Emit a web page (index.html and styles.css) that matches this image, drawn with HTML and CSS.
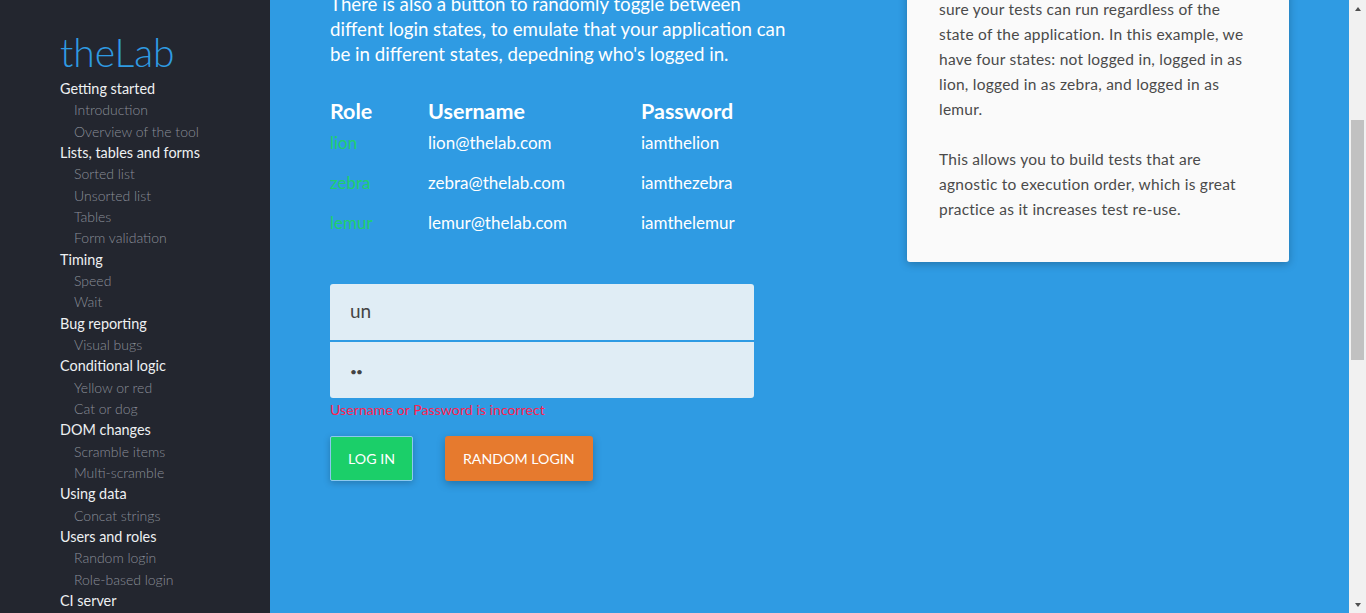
FILE: index.html
```html
<!DOCTYPE html>
<html lang="en">
<head>
<meta charset="utf-8">
<title>theLab - Random login</title>
<link rel="stylesheet" href="styles.css">
</head>
<body>
<div class="app">
  <nav class="sidebar">
    <div class="logo">theLab</div>
    <ul class="menu">
      <li>Getting started
        <ul><li>Introduction</li><li>Overview of the tool</li></ul>
      </li>
      <li>Lists, tables and forms
        <ul><li>Sorted list</li><li>Unsorted list</li><li>Tables</li><li>Form validation</li></ul>
      </li>
      <li>Timing
        <ul><li>Speed</li><li>Wait</li></ul>
      </li>
      <li>Bug reporting
        <ul><li>Visual bugs</li></ul>
      </li>
      <li>Conditional logic
        <ul><li>Yellow or red</li><li>Cat or dog</li></ul>
      </li>
      <li>DOM changes
        <ul><li>Scramble items</li><li>Multi-scramble</li></ul>
      </li>
      <li>Using data
        <ul><li>Concat strings</li></ul>
      </li>
      <li>Users and roles
        <ul><li>Random login</li><li>Role-based login</li></ul>
      </li>
      <li>CI server
        <ul><li>Jenkins</li></ul>
      </li>
    </ul>
  </nav>
  <main class="main" id="main">
    <div class="content">
      <section class="left">
        <h1 class="title">Random login</h1>
        <p class="text">Here you can log in as different users.</p>
        <p class="text">Each user has their own role.</p>
        <p class="text lead">There is also a button to randomly toggle between diffent login states, to emulate that your application can be in different states, depedning who's logged in.</p>
        <div class="users">
          <div class="th">Role</div><div class="th">Username</div><div class="th">Password</div>
          <div class="td role">lion</div><div class="td">lion@thelab.com</div><div class="td">iamthelion</div>
          <div class="td role">zebra</div><div class="td">zebra@thelab.com</div><div class="td">iamthezebra</div>
          <div class="td role">lemur</div><div class="td">lemur@thelab.com</div><div class="td">iamthelemur</div>
        </div>
        <form class="login" onsubmit="return false">
          <input class="field field-top" type="text" value="un" aria-label="Username">
          <input class="field field-bottom" type="password" value="pw" aria-label="Password">
          <div class="error">Username or Password is incorrect</div>
          <div class="actions">
            <button class="btn btn-login" type="button">Log in</button>
            <button class="btn btn-random" type="button">Random login</button>
          </div>
        </form>
      </section>
      <aside class="card">
        <p class="card-text">Users can have different roles.</p>
        <p class="card-text">It's important to make<br>sure your tests can run regardless of the state of the application. In this example, we have four states: not logged in, logged in as lion, logged in as zebra, and logged in as lemur.</p>
        <p class="card-text last">This allows you to build tests that are agnostic to execution order, which is great practice as it increases test re-use.</p>
      </aside>
    </div>
  </main>
  <div class="scrollbar" aria-hidden="true">
    <span class="sb-btn sb-up"></span>
    <div class="sb-track"><span class="sb-thumb"></span></div>
    <span class="sb-btn sb-down"></span>
  </div>
</div>
<script src="script.js"></script>
</body>
</html>
```

FILE: styles.css
```css
* { box-sizing: border-box; }
html, body { margin: 0; height: 100%; }
body {
  font-family: Lato, "Open Sans", sans-serif;
  overflow: hidden;
}
.app { display: flex; height: 100vh; }

.sidebar {
  width: 270px;
  flex: none;
  background: #23262f;
  padding: 30px 0 0 60px;
  overflow: hidden;
}
.logo {
  font-size: 39px;
  line-height: 44px;
  font-weight: 300;
  color: #2f9be3;
  margin-bottom: 4px;
}
.menu, .menu ul { list-style: none; margin: 0; padding: 0; }
.menu > li {
  color: #eef0f2;
  font-size: 14.4px;
  line-height: 21.33px;
}
.menu ul li {
  color: #8a8e98;
  font-size: 14px;
  font-weight: 300;
  padding-left: 14px;
}

.main {
  flex: 1;
  min-width: 0;
  overflow: hidden;
  background: #2f9be3;
}

.scrollbar {
  width: 17px;
  flex: none;
  display: flex;
  flex-direction: column;
  background: #f1f1f1;
}
.sb-btn {
  height: 17px;
  flex: none;
  display: flex;
  align-items: center;
  justify-content: center;
}
.sb-up::before {
  content: "";
  border-left: 3.5px solid transparent;
  border-right: 3.5px solid transparent;
  border-bottom: 4px solid #505050;
}
.sb-down::before {
  content: "";
  border-left: 3.5px solid transparent;
  border-right: 3.5px solid transparent;
  border-top: 4px solid #505050;
}
.sb-track {
  flex: 1;
  padding: 103px 2px 0;
}
.sb-thumb {
  display: block;
  height: 240px;
  background: #c1c1c1;
}

.content {
  display: grid;
  grid-template-columns: 462px 382px;
  justify-content: space-between;
  align-items: start;
  padding: 60px;
  min-height: 1480px;
}
.left {
  display: flex;
  flex-direction: column;
  color: #fff;
}
.title {
  margin: 0 0 44.5px;
  font-size: 36px;
  line-height: 50px;
  font-weight: 300;
}
.text {
  margin: 0 0 25px;
  font-size: 18.7px;
  line-height: 25px;
}
.text.lead { margin-bottom: 0; }

.users {
  display: grid;
  grid-template-columns: 98px 213px 113px;
  width: 424px;
  margin-top: 32.5px;
}
.th {
  font-size: 21.5px;
  line-height: 24px;
  font-weight: 700;
}
.td {
  font-size: 17px;
  line-height: 24px;
  padding: 8px 0;
}
.role { color: #1fd06c; }

.login {
  display: flex;
  flex-direction: column;
  align-items: flex-start;
  margin-top: 41px;
}
.field {
  width: 424px;
  height: 56px;
  border: none;
  outline: none;
  background: #e0edf5;
  padding: 0 20px 3px;
  font-family: inherit;
  font-size: 19px;
  color: #444;
}
.field-top { border-radius: 3px 3px 0 0; }
.field-bottom {
  border-radius: 0 0 3px 3px;
  margin-top: 2px;
  font-size: 12px;
  padding-top: 2px;
  padding-bottom: 0;
  letter-spacing: -1px;
}
.error {
  margin-top: 2px;
  font-size: 14.2px;
  line-height: 20px;
  color: #ff1f50;
}
.actions {
  display: flex;
  gap: 32px;
  margin-top: 16px;
}
.btn {
  height: 45px;
  padding: 0 18px;
  border: none;
  border-radius: 3px;
  font-family: inherit;
  font-size: 14.2px;
  color: #fff;
  text-transform: uppercase;
  cursor: pointer;
}
.btn-login {
  background: #1bcf69;
  border: 1px solid #8cc8ef;
  border-radius: 2px;
  padding: 0 17px;
  box-shadow: 0 2px 7px rgba(0, 0, 0, 0.22);
}
.btn-random {
  background: #e67a2e;
  box-shadow: 0 3px 8px rgba(0, 0, 0, 0.25);
}

.card {
  margin-top: 84.5px;
  background: #fafafa;
  border-radius: 3px;
  box-shadow: 0 2px 8px rgba(0, 0, 0, 0.25);
  padding: 40px 38px 40px 32px;
  color: #4a4a4a;
}
.card-text {
  margin: 0 0 25px;
  font-size: 15.5px;
  line-height: 25px;
  letter-spacing: 0.25px;
}
.card-text.last { margin-bottom: 0; }
```

FILE: script.js
```js
document.getElementById('main').scrollTop = 263;
```
